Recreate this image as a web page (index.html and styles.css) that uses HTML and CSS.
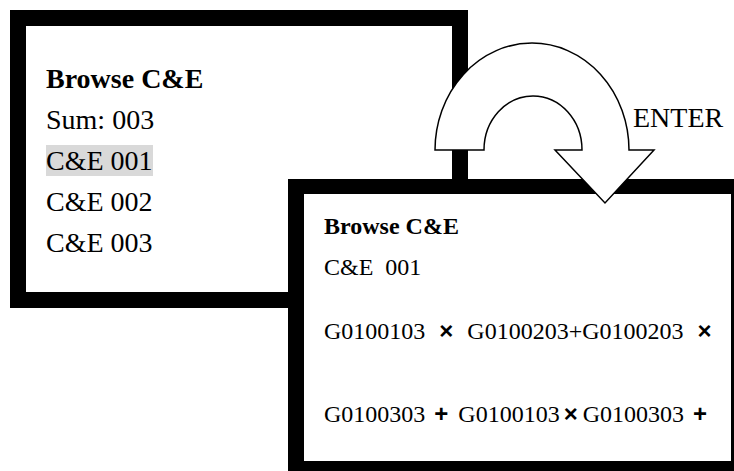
FILE: index.html
```html
<!DOCTYPE html>
<html lang="en">
<head>
    <meta charset="UTF-8">
    <meta name="viewport" content="width=device-width, initial-scale=1.0">
    <title>Browse C&amp;E</title>
    <link rel="stylesheet" href="styles.css">
</head>
<body>

    <div class="stage">
        <!-- Layar daftar -->
        <div class="screen screen-list">
            <div class="title">Browse C&amp;E</div>
            <div class="line">Sum: 003</div>
            <div class="line"><span class="selected">C&amp;E 001</span></div>
            <div class="line">C&amp;E 002</div>
            <div class="line">C&amp;E 003</div>
        </div>

        <!-- Layar detail -->
        <div class="screen screen-detail">
            <div class="title">Browse C&amp;E</div>
            <div class="line">C&amp;E&nbsp; 001</div>
            <div class="line formula">G0100103<span class="op">×</span>G0100203+G0100203<span class="op">×</span></div>
            <div class="line formula formula-last">G0100303<span class="op op-plus">+</span>G0100103<span class="op op-tight">×</span>G0100303<span class="op op-plus">+</span></div>
        </div>

        <!-- Panah ENTER -->
        <svg class="arrow" width="230" height="170" viewBox="430 38 230 170">
            <path d="M435,150 A97,107 0 0 1 629,150 L654,150 L605,203 L555,150 L582,150 A49,54 0 0 0 484,150 Z"
                  fill="#fff" stroke="#000" stroke-width="1.5" stroke-linejoin="miter"/>
        </svg>
        <span class="enter-label">ENTER</span>
    </div>

</body>
</html>
```
FILE: styles.css
```css
* {
    margin: 0;
    padding: 0;
    box-sizing: border-box;
}

body {
    font-family: "Liberation Serif", "Times New Roman", serif;
    background: #fff;
    color: #000;
    width: 734px;
    height: 471px;
    overflow: hidden;
}

.stage {
    position: relative;
    width: 734px;
    height: 471px;
    padding: 10px;
}

.screen {
    width: 458px;
    height: 298px;
    border: 16px solid #000;
    background: #fff;
}

.screen-list {
    padding: 32px 20px 0;
    font-size: 28px;
    line-height: 41px;
}

.screen-list .title {
    font-weight: bold;
}

.selected {
    background-color: #d9d9d9;
}

/* layar kedua menimpa layar pertama */
.screen-detail {
    position: absolute;
    left: 288px;
    top: 179px;
    width: 459px;
    border-top-width: 15px;
    padding: 17px 20px 0;
    font-size: 24px;
    line-height: 30px;
    white-space: nowrap;
}

.screen-detail .title {
    font-weight: bold;
}

.screen-detail .line {
    margin-top: 11px;
}

.screen-detail .formula {
    margin-top: 34px;
}

.screen-detail .formula-last {
    margin-top: 53px;
}

.op {
    font-family: "Liberation Sans", Arial, sans-serif;
    font-weight: bold;
    margin: 0 14px;
}

.op-plus {
    margin: 0 10px 0 9px;
}

.op-tight {
    margin: 0 5px 0 4px;
}

.arrow {
    position: absolute;
    left: 430px;
    top: 38px;
}

.enter-label {
    position: absolute;
    left: 633px;
    top: 102px;
    font-size: 28px;
    line-height: 32px;
}
```
